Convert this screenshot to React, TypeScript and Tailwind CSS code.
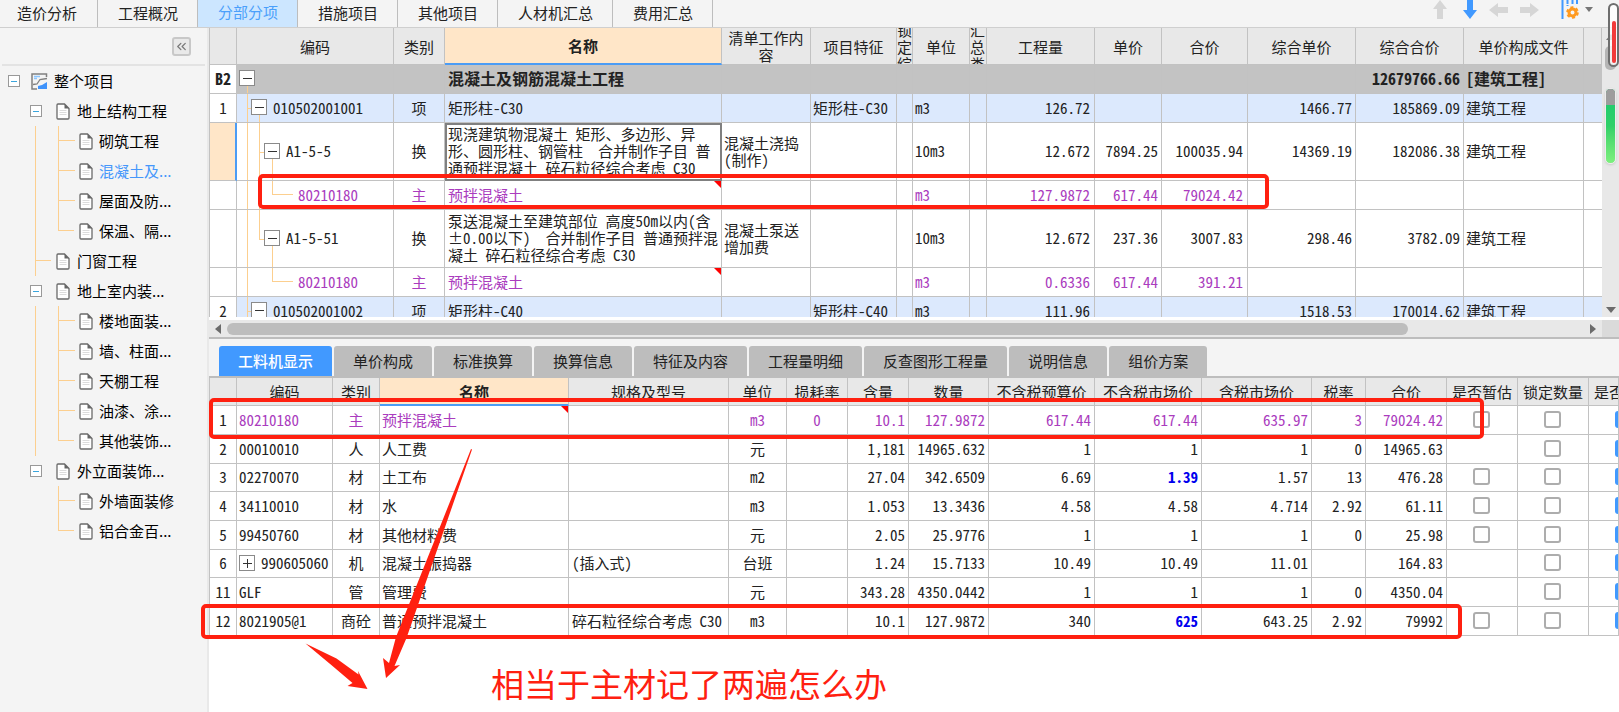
import { useState } from 'react';
import { ChevronsLeft } from 'lucide-react';

const sheetTabs = ['造价分析', '工程概况', '分部分项', '措施项目', '其他项目', '人材机汇总', '费用汇总'];
const detailTabs = ['工料机显示', '单价构成', '标准换算', '换算信息', '特征及内容', '工程量明细', '反查图形工程量', '说明信息', '组价方案'];

type TreeNode = { label: string; children?: TreeNode[] };

const tree: TreeNode[] = [
  {
    label: '地上结构工程',
    children: [{ label: '砌筑工程' }, { label: '混凝土及...' }, { label: '屋面及防...' }, { label: '保温、隔...' }],
  },
  { label: '门窗工程' },
  {
    label: '地上室内装...',
    children: [
      { label: '楼地面装...' },
      { label: '墙、柱面...' },
      { label: '天棚工程' },
      { label: '油漆、涂...' },
      { label: '其他装饰...' },
    ],
  },
  { label: '外立面装饰...', children: [{ label: '外墙面装修' }, { label: '铝合金百...' }] },
];

const billColumns = [
  { title: '', width: 27 },
  { title: '编码', width: 157 },
  { title: '类别', width: 51 },
  { title: '名称', width: 277 },
  { title: '清单工作内容', width: 89 },
  { title: '项目特征', width: 86 },
  { title: '锁定综', width: 16 },
  { title: '单位', width: 57 },
  { title: '汇总类', width: 17 },
  { title: '工程量', width: 108 },
  { title: '单价', width: 67 },
  { title: '合价', width: 86 },
  { title: '综合单价', width: 108 },
  { title: '综合合价', width: 108 },
  { title: '单价构成文件', width: 120 },
  { title: '', width: 0 },
];

type BillRow = {
  no?: string;
  level: 0 | 1 | 2 | 3;
  last?: boolean;
  code: string;
  kind: string;
  name: string;
  work?: string;
  feature?: string;
  unit?: string;
  qty?: string;
  price?: string;
  total?: string;
  fullPrice?: string;
  fullTotal?: string;
  file?: string;
  selected?: boolean;
};

const billRows: BillRow[] = [
  { no: 'B2', level: 0, code: '', kind: '', name: '混凝土及钢筋混凝土工程', fullTotal: '12679766.66', file: '[建筑工程]' },
  { no: '1', level: 1, code: '010502001001', kind: '项', name: '矩形柱-C30', feature: '矩形柱-C30', unit: 'm3', qty: '126.72', fullPrice: '1466.77', fullTotal: '185869.09', file: '建筑工程' },
  { level: 2, selected: true, code: 'A1-5-5', kind: '换', name: '现浇建筑物混凝土 矩形、多边形、异\n形、圆形柱、钢管柱  合并制作子目 普\n通预拌混凝土 碎石粒径综合考虑 C30', work: '混凝土浇捣\n(制作)', unit: '10m3', qty: '12.672', price: '7894.25', total: '100035.94', fullPrice: '14369.19', fullTotal: '182086.38', file: '建筑工程' },
  { level: 3, code: '80210180', kind: '主', name: '预拌混凝土', unit: 'm3', qty: '127.9872', price: '617.44', total: '79024.42' },
  { level: 2, last: true, code: 'A1-5-51', kind: '换', name: '泵送混凝土至建筑部位 高度50m以内(含\n±0.00以下)  合并制作子目 普通预拌混\n凝土 碎石粒径综合考虑 C30', work: '混凝土泵送\n增加费', unit: '10m3', qty: '12.672', price: '237.36', total: '3007.83', fullPrice: '298.46', fullTotal: '3782.09', file: '建筑工程' },
  { level: 3, last: true, code: '80210180', kind: '主', name: '预拌混凝土', unit: 'm3', qty: '0.6336', price: '617.44', total: '391.21' },
  { no: '2', level: 1, code: '010502001002', kind: '项', name: '矩形柱-C40', feature: '矩形柱-C40', unit: 'm3', qty: '111.96', fullPrice: '1518.53', fullTotal: '170014.62', file: '建筑工程' },
];

const resColumns = [
  { title: '', width: 27 },
  { title: '编码', width: 96 },
  { title: '类别', width: 47 },
  { title: '名称', width: 189 },
  { title: '规格及型号', width: 160 },
  { title: '单位', width: 58 },
  { title: '损耗率', width: 61 },
  { title: '含量', width: 61 },
  { title: '数量', width: 80 },
  { title: '不含税预算价', width: 106 },
  { title: '不含税市场价', width: 107 },
  { title: '含税市场价', width: 110 },
  { title: '税率', width: 54 },
  { title: '合价', width: 81 },
  { title: '是否暂估', width: 71 },
  { title: '锁定数量', width: 71 },
  { title: '是否计价', width: 0 },
];

type ResRow = {
  no: string;
  code: string;
  kind: string;
  name: string;
  spec?: string;
  unit: string;
  loss?: string;
  nums: string[];
  estimate: boolean;
  main?: boolean;
  edited?: boolean;
  expandable?: boolean;
};

// nums: 含量, 数量, 不含税预算价, 不含税市场价, 含税市场价, 税率, 合价
const resRows: ResRow[] = [
  { no: '1', code: '80210180', kind: '主', name: '预拌混凝土', unit: 'm3', loss: '0', nums: ['10.1', '127.9872', '617.44', '617.44', '635.97', '3', '79024.42'], estimate: true, main: true },
  { no: '2', code: '00010010', kind: '人', name: '人工费', unit: '元', nums: ['1,181', '14965.632', '1', '1', '1', '0', '14965.63'], estimate: false },
  { no: '3', code: '02270070', kind: '材', name: '土工布', unit: 'm2', nums: ['27.04', '342.6509', '6.69', '1.39', '1.57', '13', '476.28'], estimate: true, edited: true },
  { no: '4', code: '34110010', kind: '材', name: '水', unit: 'm3', nums: ['1.053', '13.3436', '4.58', '4.58', '4.714', '2.92', '61.11'], estimate: true },
  { no: '5', code: '99450760', kind: '材', name: '其他材料费', unit: '元', nums: ['2.05', '25.9776', '1', '1', '1', '0', '25.98'], estimate: true },
  { no: '6', code: '990605060', kind: '机', name: '混凝土振捣器', spec: '(插入式)', unit: '台班', nums: ['1.24', '15.7133', '10.49', '10.49', '11.01', '', '164.83'], estimate: false, expandable: true },
  { no: '11', code: 'GLF', kind: '管', name: '管理费', unit: '元', nums: ['343.28', '4350.0442', '1', '1', '1', '0', '4350.04'], estimate: false },
  { no: '12', code: '8021905@1', kind: '商砼', name: '普通预拌混凝土', spec: '碎石粒径综合考虑 C30', unit: 'm3', nums: ['10.1', '127.9872', '340', '625', '643.25', '2.92', '79992'], estimate: true, edited: true },
];

const cell = 'overflow-hidden border-r border-b border-[#c2c2c2] p-0 pb-[2px] whitespace-pre';
const line = 'absolute border-[#fccf8f]';

function DocIcon() {
  return (
    <svg width="14" height="17" viewBox="0 0 14 17" fill="none" className="shrink-0">
      <path d="M2 1h6.500L13 5.500V15q0 1-1 1H2q-1 0-1-1V2q0-1 1-1z" fill="#fff" stroke="#6a6a6a" strokeWidth="1.300" />
      <path d="M8.500 1v4.500H13z" fill="#666" />
      <path d="M3.500 7.500h7M3.500 9.500h7M3.500 11.500h7" stroke="#dcdcdc" />
    </svg>
  );
}

function ProjectIcon() {
  return (
    <svg width="17" height="17" viewBox="0 0 17 17" fill="none" className="shrink-0">
      <path d="M15.500 4V1H1v15h5" stroke="#808080" strokeWidth="1.500" />
      <path d="M3 3.500h6M3 5.500h3" stroke="#8cc6ff" strokeWidth="1.500" />
      <path d="M2 11.500l4-.5 3-4.500 7-1" stroke="#808080" strokeWidth="1.300" />
      <path d="M7 16v-3l4-1 5-3v7z" fill="#3f93fb" />
    </svg>
  );
}

function TreeToggle() {
  return (
    <button aria-label="折叠" className="flex size-[12px] shrink-0 items-center justify-center border border-[#999] bg-white">
      <span className="h-px w-[6px] bg-[#3aa5dc]" />
    </button>
  );
}

function RowToggle({ plus }: { plus?: boolean }) {
  return (
    <button aria-label={plus ? '展开' : '折叠'} className="relative flex size-4 shrink-0 items-center justify-center border border-[#8a8a8a] bg-white">
      <svg width="10" height="10" viewBox="0 0 10 10" stroke="#333">
        <path d={plus ? 'M1 5.500h9M5.500 1v9' : 'M1 5.500h9'} />
      </svg>
    </button>
  );
}

function Sidebar() {
  const [active, setActive] = useState('混凝土及...');
  return (
    <aside className="w-[209px] shrink-0 border-r-2 border-[#e9e9e9] bg-[#f4f4f4] text-[15px] text-black">
      <div className="mx-[2px] flex h-[38px] items-center justify-end border-b-2 border-[#e3e3e3] pr-[14px]">
        <button aria-label="收起" className="flex size-[19px] items-center justify-center rounded-[3px] border-2 border-[#c8c8c8] bg-[#e9e9e9] text-[#777]">
          <ChevronsLeft size={15} strokeWidth={2} className="shrink-0" />
        </button>
      </div>
      <div className="flex h-[30px] items-center pl-2">
        <TreeToggle />
        <span className="w-[11px]" />
        <ProjectIcon />
        <span className="pl-[6px]">整个项目</span>
      </div>
      <ul>
        {tree.map((node, i) => (
          <li key={node.label}>
            <div className="flex h-[30px] items-center">
              {node.children ? (
                <span className="flex w-[56px] pl-[30px]"><TreeToggle /></span>
              ) : (
                <span className="flex h-full w-[56px] pl-[35px]">
                  <span className="h-full border-l border-[#fccf8f]"><span className="block h-1/2 w-[15px] border-b border-[#fccf8f]" /></span>
                </span>
              )}
              <DocIcon />
              <button className="pl-[7px]">{node.label}</button>
            </div>
            {node.children && (
              <ul>
                {node.children.map((child, j) => (
                  <li key={child.label} className="flex h-[30px] items-center">
                    <span className={`ml-[35px] h-full w-[23px] shrink-0 ${i < tree.length - 1 ? 'border-l border-[#fccf8f]' : ''}`} />
                    <span className={`h-full w-[21px] shrink-0 ${j < node.children!.length - 1 ? 'border-l border-[#fccf8f]' : ''}`}>
                      <span className={`block h-1/2 w-4 border-b border-[#fccf8f] ${j < node.children!.length - 1 ? '' : 'border-l'}`} />
                    </span>
                    <DocIcon />
                    <button onClick={() => setActive(child.label)} className={`pl-[6px] ${active === child.label ? 'text-[#4597fb]' : ''}`}>
                      {child.label}
                    </button>
                  </li>
                ))}
              </ul>
            )}
          </li>
        ))}
      </ul>
    </aside>
  );
}

function Toolbar() {
  return (
    <div className="ml-auto flex items-center pr-[26px] pb-2">
      <button aria-label="上移" className="mr-4">
        <svg width="14" height="19" viewBox="0 0 14 19"><path d="M7 0l7 9h-4v10H4V9H0z" fill="#d6d6d6" /></svg>
      </button>
      <button aria-label="下移" className="mr-3">
        <svg width="14" height="19" viewBox="0 0 14 19"><path d="M7 19l7-9h-4V0H4v10H0z" fill="#4199ff" /></svg>
      </button>
      <button aria-label="左移" className="mr-3">
        <svg width="19" height="14" viewBox="0 0 19 14"><path d="M0 7l9-7v4h10v6H9v4z" fill="#d6d6d6" /></svg>
      </button>
      <button aria-label="右移" className="mr-[22px]">
        <svg width="19" height="14" viewBox="0 0 19 14"><path d="M19 7l-9-7v4H0v6h10v4z" fill="#d6d6d6" /></svg>
      </button>
      <button aria-label="列设置" className="flex items-center gap-[6px]">
        <svg width="18" height="20" viewBox="0 0 18 20" fill="none">
          <path d="M1.500 0v19" stroke="#4199ff" strokeWidth="2" />
          <path d="M6.500 0v6M11.500 0v5M16 0v5" stroke="#4199ff" strokeWidth="2" strokeDasharray="4 1" />
          <circle cx="11.500" cy="12.500" r="3.500" stroke="#ff9a1f" strokeWidth="3" />
          <circle cx="11.500" cy="12.500" r="5.300" stroke="#ff9a1f" strokeWidth="2" strokeDasharray="3 2.550" />
        </svg>
        <svg width="8" height="5" viewBox="0 0 8 5"><path d="M0 0h8L4 5z" fill="#777" /></svg>
      </button>
    </div>
  );
}

function CodeCell({ row }: { row: BillRow }) {
  const indent = ['pl-[2px]', 'pl-[14px]', 'pl-[27px]', 'pl-[61px]'][row.level];
  return (
    <td className={`${cell} relative ${indent}`}>
      <i className={`${line} bottom-0 left-[10px] border-l ${row.level === 0 ? 'top-1/2' : 'top-0'}`} />
      {row.level === 1 && <i className={`${line} top-1/2 left-[10px] w-2 border-t`} />}
      {row.level === 1 && <i className={`${line} top-1/2 bottom-0 left-[22px] border-l`} />}
      {row.level === 2 && <i className={`${line} top-0 left-[22px] border-l ${row.last ? 'bottom-1/2' : 'bottom-0'}`} />}
      {row.level === 2 && <i className={`${line} top-1/2 left-[22px] w-2 border-t`} />}
      {row.level === 2 && <i className={`${line} top-1/2 bottom-0 left-[35px] border-l`} />}
      {row.level === 3 && !row.last && <i className={`${line} top-0 bottom-0 left-[22px] border-l`} />}
      {row.level === 3 && <i className={`${line} top-0 bottom-1/2 left-[35px] w-[21px] border-b border-l`} />}
      <span className="flex items-center gap-[6px]">
        {row.level < 3 && <RowToggle />}
        {row.code}
      </span>
    </td>
  );
}

function BillHeading({ title, width }: { title: string; width: number }) {
  // columns dragged down to almost nothing still stack their title one glyph per line
  if (width > 0 && width < 20) {
    return (
      <span className="flex h-9 items-center overflow-hidden">
        <span className="w-[15px] shrink-0 break-all">{title}</span>
      </span>
    );
  }
  return <span className="block px-[3px] break-all">{title}</span>;
}

function BillTable() {
  return (
    <table className="w-full table-fixed border-separate border-spacing-0 border-l border-[#c2c2c2] bg-white text-[15px] leading-[17px] text-[#222]">
      <colgroup>
        {billColumns.map((c, i) => (
          <col key={i} style={c.width ? { width: c.width } : undefined} />
        ))}
      </colgroup>
      <thead>
        <tr className="h-[37px]">
          {billColumns.map((c, i) => (
            <th
              key={i}
              className={`overflow-hidden border-r border-[#c2c2c2] p-0 ${c.title === '名称' ? 'border-b-2 border-b-[#4b9cf5] bg-[#ffe6c8] font-bold' : 'border-b bg-[#e8e8e8] font-normal'}`}
            >
              <BillHeading title={c.title} width={c.width} />
            </th>
          ))}
        </tr>
      </thead>
      <tbody>
        {billRows.map((r, i) => {
          const tall = r.level === 2;
          const tone = r.level === 0 ? 'bg-[#c3c3c3] text-[16px] font-bold' : r.level === 1 ? 'bg-[#dce9fd]' : r.level === 3 ? 'text-[#aa3cbe]' : '';
          return (
            <tr key={i} className={`${tall ? 'h-[58px]' : 'h-[29px]'} ${tone}`}>
              <td className={`${cell} text-center ${r.selected ? 'border-r-2 border-r-[#4b9cf5] bg-[#ffe6c8]' : 'bg-white'}`}>{r.no}</td>
              <CodeCell row={r} />
              <td className={`${cell} text-center`}>{r.kind}</td>
              <td className={`${cell} relative pl-[3px] ${r.selected ? 'outline-2 -outline-offset-2 outline-[#808080]' : ''}`}>
                {r.name}
                {r.level === 3 && <i className="absolute top-0 right-0 border-t-[7px] border-l-[7px] border-t-[#ff0000] border-l-transparent" />}
              </td>
              <td className={`${cell} pl-[2px]`}>{r.work}</td>
              <td className={`${cell} pl-[2px]`}>{r.feature}</td>
              <td className={cell} />
              <td className={`${cell} pl-[2px]`}>{r.unit}</td>
              <td className={cell} />
              <td className={`${cell} pr-1 text-right`}>{r.qty}</td>
              <td className={`${cell} pr-[3px] text-right`}>{r.price}</td>
              <td className={`${cell} pr-1 text-right`}>{r.total}</td>
              <td className={`${cell} pr-[3px] text-right`}>{r.fullPrice}</td>
              <td className={`${cell} pr-[3px] text-right`}>{r.fullTotal}</td>
              <td className={`${cell} pl-[2px]`}>{r.file}</td>
              <td className={`${cell} border-r-0`} />
            </tr>
          );
        })}
      </tbody>
    </table>
  );
}

function Check({ label }: { label: string }) {
  return <input type="checkbox" aria-label={label} className="block size-[17px] appearance-none rounded-[3px] border-2 border-[#adadad] bg-white" />;
}

function ResourceTable() {
  return (
    <table className="w-full table-fixed border-separate border-spacing-0 border-l border-[#c2c2c2] bg-white text-[15px] leading-[17px] text-[#222]">
      <colgroup>
        {resColumns.map((c, i) => (
          <col key={i} style={c.width ? { width: c.width } : undefined} />
        ))}
      </colgroup>
      <thead>
        <tr className="h-[28px]">
          {resColumns.map((c, i) => (
            <th
              key={i}
              className={`overflow-hidden border-r border-[#c2c2c2] p-0 whitespace-nowrap ${c.title === '名称' ? 'border-b-2 border-b-[#4b9cf5] bg-[#ffe6c8] font-bold' : 'border-b bg-[#e8e8e8] font-normal'} ${c.width ? '' : 'pl-[5px] text-left'}`}
            >
              {c.title}
            </th>
          ))}
        </tr>
      </thead>
      <tbody>
        {resRows.map((r) => (
          <tr key={r.no} className={`h-[29px] nth-[3n]:h-[28px] ${r.main ? 'text-[#aa3cbe]' : ''}`}>
            <td className={`${cell} text-center text-[#222]`}>{r.no}</td>
            <td className={`${cell} pl-[2px]`}>
              <span className="flex items-center gap-[6px]">
                {r.expandable && <RowToggle plus />}
                {r.code}
              </span>
            </td>
            <td className={`${cell} text-center`}>{r.kind}</td>
            <td className={`${cell} relative pl-[2px]`}>
              {r.name}
              {r.main && <i className="absolute top-0 right-0 border-t-[7px] border-l-[7px] border-t-[#ff0000] border-l-transparent" />}
            </td>
            <td className={`${cell} pl-[3px]`}>{r.spec}</td>
            <td className={`${cell} text-center`}>{r.unit}</td>
            <td className={`${cell} text-center`}>{r.loss}</td>
            {r.nums.map((n, i) => (
              <td key={i} className={`${cell} pr-[3px] text-right ${r.edited && i === 3 ? 'font-bold text-[#0000ee]' : ''}`}>{n}</td>
            ))}
            <td className={`${cell} pb-0 pl-[26px]`}>{r.estimate && <Check label={`${r.name} 是否暂估`} />}</td>
            <td className={`${cell} pb-0 pl-[26px]`}><Check label={`${r.name} 锁定数量`} /></td>
            <td className={`${cell} pb-0 pl-[26px]`}>
              <input type="checkbox" defaultChecked aria-label={`${r.name} 是否计价`} className="block h-[17px] w-[17px] appearance-none rounded-[3px] bg-[#4199ff]" />
            </td>
          </tr>
        ))}
      </tbody>
    </table>
  );
}

function Annotations() {
  const box = 'absolute rounded-[5px] border-4 border-[#ff2010]';
  return (
    <div className="pointer-events-none absolute inset-0">
      <div className={`${box} top-[174px] left-[258px] h-[35px] w-[1011px]`} />
      <div className={`${box} top-[398px] left-[209px] h-[41px] w-[1275px]`} />
      <div className={`${box} top-[604px] left-[201px] h-[35px] w-[1261px]`} />
      <svg width="300" height="260" viewBox="280 440 300 260" className="absolute top-[440px] left-[280px]" fill="#ff2010">
        <path d="M471 449l1 .5L406.500 638 394.500 666l5.500-1L386 678l-3-20 6 5 7-26z" />
        <path d="M305.500 643.500l31 15 22 16-.5-3.500 9.500 18-20-3 5-3-20-17z" />
      </svg>
      <p className="absolute top-[659px] left-[491px] text-[33px] leading-[48px] whitespace-nowrap text-[#ff2010]">相当于主材记了两遍怎么办</p>
    </div>
  );
}

export default function App() {
  const [sheet, setSheet] = useState('分部分项');
  const [detail, setDetail] = useState('工料机显示');

  return (
    <div className="relative flex min-h-screen flex-col overflow-hidden bg-[#f4f4f4] font-['Noto_Sans_CJK_SC',sans-serif]">
      <nav className="flex h-[28px] border-b border-[#cfcfcf] text-[15px] leading-[24px] text-[#222]">
        {sheetTabs.map((t) => (
          <button
            key={t}
            onClick={() => setSheet(t)}
            className={`border-r border-[#bdbdbd] pr-[19px] pl-5 first:pr-5 first:pl-[17px] ${t === sheet ? 'bg-[#cce6ff] pb-1 text-[#4a9ffb]' : 'pb-[2px]'}`}
          >
            {t}
          </button>
        ))}
        <Toolbar />
      </nav>

      <div className="flex flex-1">
        <Sidebar />
        <main className="flex min-w-0 flex-1 flex-col bg-white">
          <div className="flex">
            <div className="h-[289px] min-w-0 flex-1 overflow-hidden [font-feature-settings:'hwid']">
              <BillTable />
            </div>
            <div className="relative flex w-[17px] shrink-0 flex-col bg-[#e8e8e8]">
              <svg width="10" height="6" viewBox="0 0 10 6" className="mt-[6px] ml-1"><path d="M5 0l5 6H0z" fill="#777" /></svg>
              <span className="mt-[6px] ml-[3px] h-6 w-[11px] rounded-[5px] bg-[#b5b5b5]" />
              <span className="mt-[18px] ml-[3px] h-[76px] w-[11px] overflow-hidden rounded-[5px] border border-[#ececec] bg-gradient-to-b from-[#18c970] via-[#2fd068] to-[#7cf07e] shadow">
                <span className="block h-4 bg-[#9d9d9d]" />
              </span>
              <svg width="10" height="6" viewBox="0 0 10 6" className="mt-auto mb-1 ml-1"><path d="M0 0h10L5 6z" fill="#6b6b6b" /></svg>
            </div>
          </div>

          <div className="mt-[3px] flex h-[17px] items-center bg-[#e8e8e8]">
            <svg width="6" height="10" viewBox="0 0 6 10" className="ml-[6px]"><path d="M6 0v10L0 5z" fill="#6b6b6b" /></svg>
            <div className="mx-[6px] flex-1"><div className="h-3 w-[87%] rounded-full bg-[#bdbdbd]" /></div>
            <svg width="6" height="10" viewBox="0 0 6 10" className="mr-[6px]"><path d="M0 0v10l6-5z" fill="#6b6b6b" /></svg>
            <span className="h-full w-[17px] bg-[#dadada]" />
          </div>

          <div className="flex h-[41px] items-end gap-[2px] border-t-2 border-b-2 border-[#bdbdbd] bg-[#f4f4f4] pl-[10px]">
            {detailTabs.map((t) => (
              <button
                key={t}
                onClick={() => setDetail(t)}
                className={`h-[30px] rounded-t-[3px] px-[19px] text-[15px] ${t === detail ? 'bg-[#4199ff] font-medium text-white' : 'bg-[#bdbdbd] text-[#222]'}`}
              >
                {t}
              </button>
            ))}
          </div>

          <div className="[font-feature-settings:'hwid']">
            <ResourceTable />
          </div>
        </main>
      </div>

      {/* floating meter that hangs over the top right corner */}
      <div className="absolute top-[3px] right-0 flex h-16 w-[11px] items-end justify-center rounded-full border-2 border-[#6e6e6e] bg-white/80 pb-[2px]">
        <span className="h-[42px] w-1 rounded-full bg-[#f23a3a]" />
      </div>
      <Annotations />
    </div>
  );
}
